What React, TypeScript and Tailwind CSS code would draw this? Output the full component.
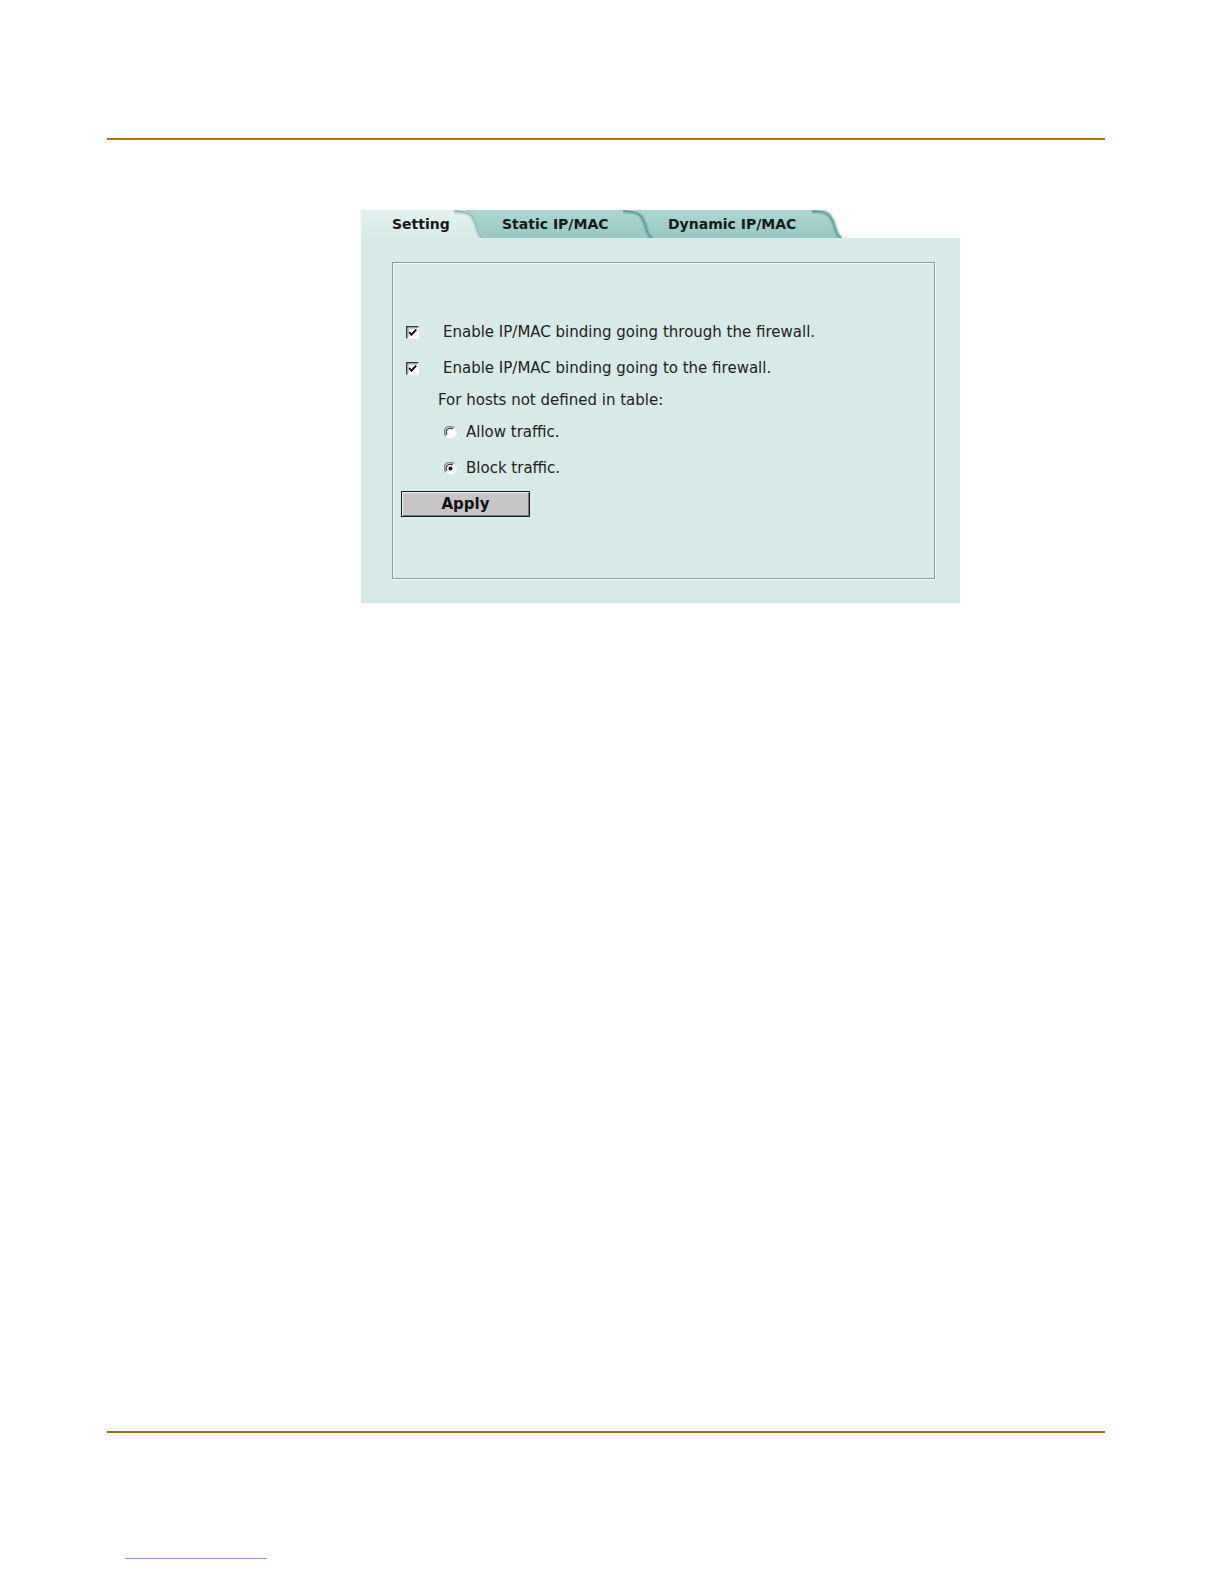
import React from "react";

const FONT = { fontFamily: '"DejaVu Sans", Verdana, sans-serif' };

function TabShape({ w, active }: { w: number; active?: boolean }) {
  const h = 28;
  const d = `M0,${h} V0 H${w - 30} C${w - 16},0 ${w - 12},4 ${w - 9},12 C${w - 6},20 ${w - 5},${h} ${w},${h} Z`;
  const edge = `M${w - 30},1.2 C${w - 16},1.2 ${w - 12},4 ${w - 9},12 C${w - 6},20 ${w - 5},${h} ${w},${h}`;
  const id = `g${w}${active ? "a" : ""}`;
  return (
    <svg className="absolute inset-0" width={w} height={h} viewBox={`0 0 ${w} ${h}`}>
      <defs>
        <linearGradient id={id} x1="0" y1="0" x2="0" y2="1">
          <stop offset="0" stopColor={active ? "#e4f2f0" : "#add7d2"} />
          <stop offset="1" stopColor={active ? "#d7eae8" : "#97c8c3"} />
        </linearGradient>
      </defs>
      <path d={d} fill={`url(#${id})`} />
      <path d={edge} fill="none" stroke={active ? "#a9cfcb" : "#7cb0ab"} strokeWidth="5" opacity="0.6" />
      <path d={edge} fill="none" stroke={active ? "#8fbcb7" : "#5f9792"} strokeWidth="1.4" />
    </svg>
  );
}

function Tab({ label, w, ml, z, active, pl }: { label: string; w: number; ml: number; z: string; active?: boolean; pl: number }) {
  return (
    <div className={`relative h-[28px] ${z}`} style={{ width: w, marginLeft: ml }}>
      <TabShape w={w} active={active} />
      <div className="relative h-full flex items-center text-[14px] font-bold text-[#141a1a]" style={{ paddingLeft: pl }}>
        {label}
      </div>
    </div>
  );
}

function Check() {
  return (
    <svg width="13" height="13" viewBox="0 0 13 13" className="shrink-0">
      <rect x="0" y="0" width="13" height="13" fill="#ffffff" />
      <path d="M0.75,12.5 V0.75 H12.5" fill="none" stroke="#3a3a3a" strokeWidth="1.5" />
      <path d="M2,11.5 V2 H11.5" fill="none" stroke="#9a9a9a" />
      <path d="M3.2,6 L5.4,8.8 L10.2,3.6" fill="none" stroke="#000" strokeWidth="1.9" />
    </svg>
  );
}

function Radio({ on }: { on?: boolean }) {
  return (
    <svg width="13" height="13" viewBox="0 0 13 13" className="shrink-0">
      <circle cx="6.5" cy="6.5" r="6" fill="#ffffff" />
      <path d="M1.9,10 A5.6,5.6 0 0 1 10,1.9" fill="none" stroke="#8a8a8a" strokeWidth="1.4" />
      <path d="M3,8.6 A4,4 0 0 1 8.6,3" fill="none" stroke="#2a2a2a" strokeWidth="1.2" />
      {on && <circle cx="6.5" cy="6.5" r="2" fill="#000" />}
    </svg>
  );
}

export default function App() {
  return (
    <div className="w-[1224px] h-[1584px] bg-white" style={FONT}>
      <div className="h-[138px]" />
      <div className="ml-[107px] w-[998px] h-[2px] bg-[#b5720f]" />

      <div className="ml-[361px] mt-[70px] w-[599px]">
        <div className="flex h-[28px]">
          <Tab label="Setting" w={123} ml={0} z="z-30" active pl={31} />
          <Tab label="Static IP/MAC" w={187} ml={-18} z="z-20" pl={36} />
          <Tab label="Dynamic IP/MAC" w={206} ml={-17} z="z-10" pl={32} />
        </div>
        <div className="bg-[#d7eae8] h-[365px] pt-[24px] pl-[31px] pr-[25px]">
          <div className="h-[317px] border border-[#8c9a9a] shadow-[1px_1px_0_#f4fbfa,inset_1px_1px_0_#f4fbfa] pt-[51px] text-[15px] text-[#1e2222]">
            <div className="h-[36px] flex items-center pl-[13px]">
              <Check />
              <span className="ml-[24px]">Enable IP/MAC binding going through the firewall.</span>
            </div>
            <div className="h-[36px] flex items-center pl-[13px]">
              <Check />
              <span className="ml-[24px]">Enable IP/MAC binding going to the firewall.</span>
            </div>
            <div className="h-[28px] flex items-center pl-[45px]">For hosts not defined in table:</div>
            <div className="h-[36px] flex items-center pl-[51px]">
              <Radio />
              <span className="ml-[9px]">Allow traffic.</span>
            </div>
            <div className="h-[36px] flex items-center pl-[51px]">
              <Radio on />
              <span className="ml-[9px]">Block traffic.</span>
            </div>
            <div className="pl-[8px] mt-[5px]">
              <button
                className="w-[129px] h-[26px] bg-[#c6c6c6] border border-[#1a1a1a] shadow-[inset_1px_1px_0_#f2f2f2,inset_-1px_-1px_0_#7a7a7a] text-[15px] font-bold text-[#111] flex items-center justify-center"
                style={FONT}
              >
                Apply
              </button>
            </div>
          </div>
        </div>
      </div>

      <div className="h-[828px]" />
      <div className="ml-[107px] w-[998px] h-[2px] bg-[#9c6a12]" />
      <div className="h-[125px]" />
      <div className="ml-[125px] w-[142px] h-[1px] bg-[#8c98e0]" />
    </div>
  );
}
